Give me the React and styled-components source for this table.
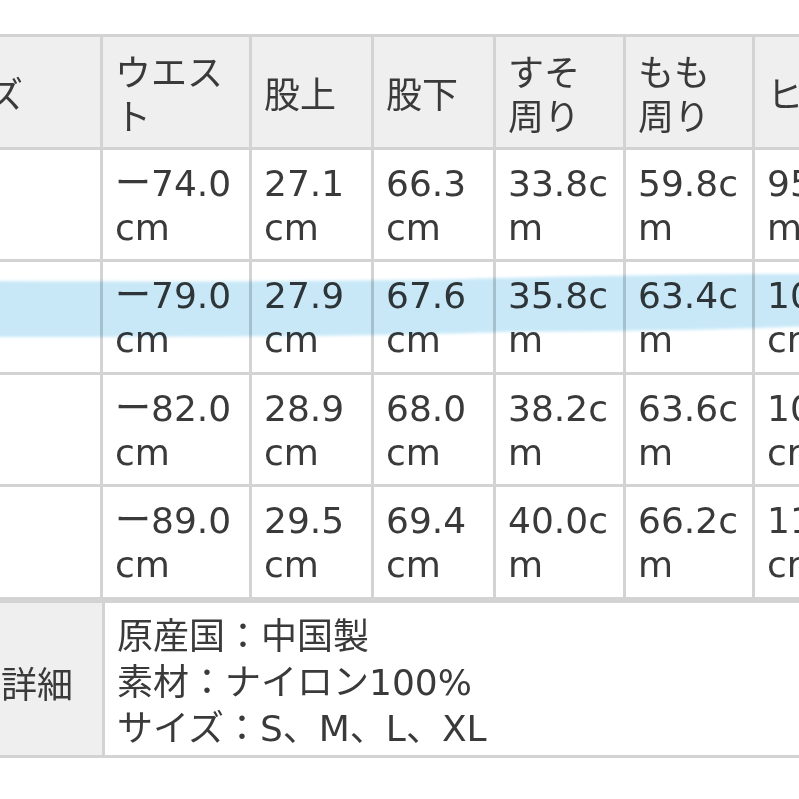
import React from "react";
import styled, { createGlobalStyle } from "styled-components";

const Global = createGlobalStyle`
  html, body { margin: 0; padding: 0; background: #ffffff; }
  body { font-family: "DejaVu Sans", "Noto Sans CJK JP", sans-serif; }
  * { box-sizing: border-box; }
`;

const Page = styled.div`
  position: relative;
  width: 799px;
  height: 799px;
  overflow: hidden;
  padding-top: 34px;
  color: #3a3a3a;
  font-family: "DejaVu Sans", "Noto Sans CJK JP", sans-serif;
  font-size: 36px;
`;

const SizeGrid = styled.div`
  display: grid;
  grid-template-columns: 199px 149px 122px 122px 130px 129px 142px 142px;
  grid-auto-rows: 112.5px;
  margin-left: -96px;
  width: max-content;
  border-top: 3px solid #d3d3d3;
`;

const Cell = styled.div`
  display: flex;
  align-items: center;
  padding: ${(p) => (p.$head ? "8px 12px 0" : "3px 12px 0")};
  line-height: 44px;
  word-break: break-all;
  background: ${(p) => (p.$head ? "#efefef" : "#ffffff")};
  border-right: 3px solid #d3d3d3;
  border-bottom: 3px solid #d3d3d3;
`;

const DetailGrid = styled.div`
  display: grid;
  grid-template-columns: 188px 900px;
  margin-left: -83px;
  width: max-content;
  border-top: 3px solid #d3d3d3;
  border-bottom: 3px solid #d3d3d3;
`;

const DetailHead = styled.div`
  display: flex;
  align-items: center;
  padding: 6px 12px 0;
  background: #efefef;
  border-right: 3px solid #d3d3d3;
`;

const DetailBody = styled.div`
  padding: 11px 12px 3px;
  line-height: 46px;
  background: #ffffff;
`;

const Highlight = styled.svg`
  position: absolute;
  left: 0;
  top: 0;
  width: 799px;
  height: 799px;
  pointer-events: none;
  mix-blend-mode: multiply;
`;

const headers = ["サイズ", "ウエスト", "股上", "股下", "すそ周り", "もも周り", "ヒップ", "総丈"];
const rows = [
  ["S", "ー74.0cm", "27.1cm", "66.3cm", "33.8cm", "59.8cm", "95.6cm", "93.4cm"],
  ["M", "ー79.0cm", "27.9cm", "67.6cm", "35.8cm", "63.4cm", "100.2cm", "95.5cm"],
  ["L", "ー82.0cm", "28.9cm", "68.0cm", "38.2cm", "63.6cm", "104.0cm", "96.0cm"],
  ["XL", "ー89.0cm", "29.5cm", "69.4cm", "40.0cm", "66.2cm", "110.4cm", "97.4cm"],
];

export default function App() {
  return (
    <>
      <Global />
      <Page>
        <SizeGrid>
          {headers.map((h) => (
            <Cell key={h} $head>
              {h}
            </Cell>
          ))}
          {rows.map((r, i) =>
            r.map((v, j) => (
              <Cell key={`${i}-${j}`} $head={false}>
                {v}
              </Cell>
            ))
          )}
        </SizeGrid>
        <DetailGrid>
          <DetailHead>商品詳細</DetailHead>
          <DetailBody>
            <div>原産国：中国製</div>
            <div>素材：ナイロン100%</div>
            <div>サイズ：S、M、L、XL</div>
          </DetailBody>
        </DetailGrid>
        <Highlight viewBox="0 0 799 799">
          <defs>
            <filter id="soft" x="-5%" y="-50%" width="110%" height="200%">
              <feGaussianBlur stdDeviation="1.6" />
            </filter>
          </defs>
          <path
            d="M -10 281 C 200 282, 400 281, 500 278 C 600 276, 700 274, 810 274 L 810 326 C 700 331, 600 331, 500 332 C 400 336, 200 337, -10 337 Z"
            fill="#c8e8f8"
            filter="url(#soft)"
          />
        </Highlight>
      </Page>
    </>
  );
}
